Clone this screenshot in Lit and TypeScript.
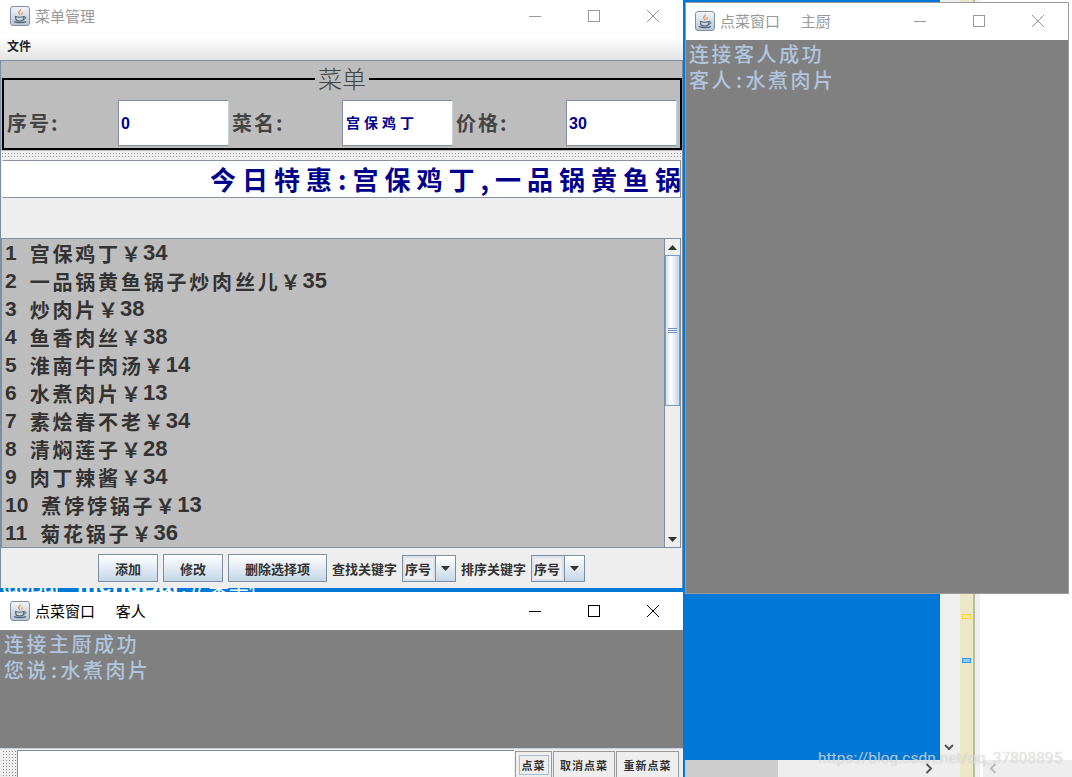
import { LitElement, html, css, svg } from "lit";
import { customElement } from "lit/decorators.js";

const javaIcon = html`<svg class="jicon" width="20" height="20" viewBox="0 0 20 20">
  <defs><linearGradient id="jg" x1="0" y1="0" x2="0" y2="1"><stop offset="0" stop-color="#f4f7fa"/><stop offset="1" stop-color="#b4c4d4"/></linearGradient></defs>
  <rect x="0.5" y="0.5" width="19" height="19" rx="2.5" fill="url(#jg)" stroke="#7f8f9f"/>
  ${svg`<path d="M10.5 2.5c1.5 2-2 3-1 5 .4.8 1 1 1 2-1-.6-2.6-1.6-2.3-3.2.3-1.600 2.100-2 2.300-3.800z" fill="#e2762a"/>
  <path d="M12.200 5c.2 1.200-1.300 1.700-.9 3 .1.400.3.700.3 1 .9-.8 1.500-1.600 1.100-2.600-.1-.5-.4-.9-.5-1.400z" fill="#e8974f"/>
  <path d="M5.500 10.500c2 .8 6.500.8 8.500 0l-.5 3c-.3 1-2 1.500-3.700 1.500s-3.600-.5-3.900-1.500z" fill="none" stroke="#55606c" stroke-width="1.100"/>
  <path d="M14 11c1.400-.4 2.300.3 1.800 1.200-.4.700-1.300 1-2.300 1.200" fill="none" stroke="#55606c" stroke-width="1"/>
  <path d="M4 15.500c2.500 1.500 9.500 1.500 12 0" fill="none" stroke="#4a5f78" stroke-width="1.200"/>`}
</svg>`;

const winBtns = html`<div class="btns">
  <svg width="14" height="14" viewBox="0 0 14 14"><path d="M1 7.500h12" stroke="currentColor" fill="none"/></svg>
  <svg width="14" height="14" viewBox="0 0 14 14"><rect x="1.500" y="1.500" width="11" height="11" stroke="currentColor" fill="none"/></svg>
  <svg width="14" height="14" viewBox="0 0 14 14"><path d="M1 1l12 12M13 1L1 13" stroke="currentColor" fill="none"/></svg>
</div>`;

const arrow = (up = false) => html`<svg width="9" height="5" viewBox="0 0 9 5"><path d="${up ? "M0 5h9L4.500 0z" : "M0 0h9L4.500 5z"}" fill="#333"/></svg>`;

const items = [
  ["1", "宫保鸡丁", "34"], ["2", "一品锅黄鱼锅子炒肉丝儿", "35"], ["3", "炒肉片", "38"], ["4", "鱼香肉丝", "38"],
  ["5", "淮南牛肉汤", "14"], ["6", "水煮肉片", "13"], ["7", "素烩春不老", "34"], ["8", "清焖莲子", "28"],
  ["9", "肉丁辣酱", "34"], ["10", "煮饽饽锅子", "13"], ["11", "菊花锅子", "36"],
];

@customElement("app-root")
export class AppRoot extends LitElement {
  static styles = css`
    :host { display: block; width: 1072px; height: 777px; position: relative; overflow: hidden; background: #fff;
      font-family: "Liberation Sans", "Noto Sans CJK SC", sans-serif; }
    .desktop { position: absolute; inset: 0; display: grid; grid-template-columns: 940px 20px 13px 2px 5px 1fr; }
    .blue { background: #0078d7; overflow: hidden; padding: 570px 0 0 2px; color: #fff; font: 20px "Liberation Sans", "Noto Sans CJK SC", sans-serif; white-space: pre; }
    .blue b { font-size: 24px; margin-left: 5px; }
    .lg { background: #efefef; }
    .beige { background: #ebe7c7; }
    .rule { background: #b9bd9f; }
    .white { background: #fff; }
    .mark { position: absolute; left: 962px; width: 9px; height: 5px; }
    .mark.y { top: 614px; background: #fbeaa0; border: 1px solid #f5cf3c; box-sizing: border-box; }
    .mark.b { top: 658px; background: #9ec6e6; border: 1px solid #2f9bf0; box-sizing: border-box; }
    .chev { position: absolute; }
    .hbar { position: absolute; top: 760px; height: 17px; background: #eee; }
    .hthumb { position: absolute; left: 685px; top: 760px; width: 93px; height: 17px; background: #cdcdcd; }

    .win { position: absolute; display: flex; flex-direction: column; background: #fff; box-sizing: border-box; overflow: hidden; }
    .title { display: flex; align-items: center; flex: none; background: #fff; font-size: 15px; box-sizing: border-box; }
    .title .name { margin-left: 5px; white-space: pre; }
    .inactive .title { color: #999; }
    .active .title { color: #000; }
    .jicon { flex: none; }
    .btns { margin-left: auto; display: flex; gap: 45px; align-items: center; }

    .main { left: 0; top: 0; width: 683px; height: 588px; }
    .main .title { height: 33px; padding: 0 23px 2px 10px; }
    .menubar { height: 27px; flex: none; background: linear-gradient(#fff 0%, #fff 15%, #e3e3e3 100%); font-size: 12px; font-weight: 700; color: #222; display: flex; align-items: center; padding: 0 0 2px 7px; box-sizing: border-box; }
    .content { flex: 1; display: flex; flex-direction: column; border-left: 1px solid #7d8fa3; border-right: 1px solid #7d8fa3; background: #eee; min-height: 0; }
    .formpanel { height: 91px; flex: none; background: #bdbdbd; border-top: 1px solid #7d8fa3; box-sizing: border-box; padding-top: 17px; position: relative; }
    .group { height: 72px; margin: 0 0 0 1px; width: 680px; border: 2px solid #000; box-sizing: border-box; display: grid; grid-template-columns: 111px 111px 113px 111px 113px 111px; column-gap: 0; align-items: center; padding: 20px 0 2px 3px; position: relative; }
    .legend { position: absolute; left: 311px; top: -16px; background: #bdbdbd; padding: 0 3px; font-size: 24px; line-height: 28px; color: #444; font-family: "Noto Sans CJK SC", sans-serif; font-weight: 300; }
    .lbl { font-size: 20px; font-weight: 700; color: #444; letter-spacing: 2px; font-family: "Noto Sans CJK SC", sans-serif; padding-bottom: 2px; }
    .lbl.next { padding-left: 3px; }
    .field { height: 46px; background: #fff; border: 1px solid #7d8fa3; border-right-color: #c9d3de; border-top-color: #7d8fa3; box-sizing: border-box; display: flex; align-items: center; padding: 1px 0 0 2px; color: #00008b; font-weight: 700; font-size: 16px; }
    .field.cn { font-size: 14px; letter-spacing: 4px; padding: 0 0 2px 3px; font-family: "Noto Sans CJK SC", sans-serif; }
    .dots { flex: none; height: 7px; background-color: #eee; background-image: radial-gradient(#9a9a9a 0.7px, transparent 0.8px); background-size: 3px 3px; background-position: 0 1px; }
    .marquee { height: 38px; flex: none; margin: 2px 1px 0 1px; border: 1px solid #8593a3; border-left-color: #fff; border-top-color: #8593a3; background: #fff; box-sizing: border-box; overflow: hidden; white-space: nowrap; display: flex; align-items: center; padding: 0 0 2px 207px; font-size: 26px; font-weight: 700; letter-spacing: 6px; color: #00008b; font-family: "Noto Sans CJK SC", sans-serif; }
    .gap { height: 40px; flex: none; background: #eee; }
    .listwrap { height: 310px; flex: none; display: flex; border: 1px solid #7d8fa3; border-left: 1px solid #7d8fa3; border-right: none; margin-right: 1px; box-sizing: border-box; background: #bdbdbd; }
    .list { flex: 1; min-width: 0; overflow: hidden; padding: 0 0 0 3px; }
    .row { height: 28px; display: flex; align-items: center; font-size: 20px; font-weight: 700; color: #333; white-space: pre; font-family: "Liberation Sans", "Noto Sans CJK SC", sans-serif; }
    .row .n { font-size: 21px; margin-right: 13px; }
    .row .c { letter-spacing: 2.800px; font-family: "Noto Sans CJK SC", sans-serif; }
    .row .p { font-size: 22px; margin-left: 2px; }
    .sb { width: 15px; flex: none; border-left: 1px solid #7d8fa3; border-right: 1px solid #7d8fa3; display: flex; flex-direction: column; background: #eee; box-sizing: content-box; }
    .sbb { height: 16px; flex: none; display: flex; align-items: center; justify-content: center; background: #eee; }
    .thumb { height: 151px; flex: none; border: 1px solid #7b9bcf; box-sizing: border-box; background: linear-gradient(90deg, #d5e2f0, #fff 35%, #c4d6e9 100%); display: flex; flex-direction: column; align-items: center; justify-content: center; gap: 1px; }
    .thumb i { display: block; width: 9px; height: 1px; background: #6f92c9; }
    .track { flex: 1; }
    .toolbar { flex: 1; display: flex; align-items: center; justify-content: flex-start; padding: 0 0 0 97px; background: #eee; font-size: 13px; font-weight: 700; color: #333; font-family: "Noto Sans CJK SC", sans-serif; }
    .jbtn { height: 28px; box-sizing: border-box; border: 1px solid #7d8fa3; background: linear-gradient(#fff, #c5d6e8); display: flex; align-items: center; justify-content: center; color: #333; font-size: 13px; margin-right: 5px; }
    .w60 { width: 60px; } .w99 { width: 99px; }
    .kw { margin-left: 0; width: 70px; font-size: 13px; }
    .combo { width: 54px; height: 27px; border: 1px solid #7d8fa3; box-sizing: border-box; display: flex; margin-right: 5px; }
    .combo .v { flex: 1; border: 2px solid #d9e2ec; background: #eee; display: flex; align-items: center; padding-left: 0; font-size: 13px; }
    .combo .a { width: 19px; border-left: 1px solid #7d8fa3; background: linear-gradient(#fff, #c5d6e8); display: flex; align-items: center; justify-content: center; }

    .log { background: #808080; color: #b0c4de; font-family: "Noto Sans CJK SC", sans-serif; font-size: 20px; line-height: 26px; letter-spacing: 2.500px; font-weight: 500; padding: 1px 0 0 3px; box-sizing: border-box; flex: 1; min-height: 0; }
    .cl { padding: 0 1px 0 2px; }

    .chef { left: 685px; top: 2px; width: 384px; height: 592px; border: 1px solid #9a9a9a; }
    .chef .title { height: 37px; padding: 0 23px 2px 9px; }
    .chef .log { padding-left: 2px; border-left: 1px solid #808080; }

    .cust { left: 0; top: 592px; width: 683px; height: 185px; }
    .cust .title { height: 38px; padding: 0 23px 1px 10px; }
    .cust .log { flex: none; height: 118px; padding-left: 4px; }
    .input { flex: 1; display: flex; background: #eee; border-top: 1px solid #c4d0dc; padding-top: 1px; min-height: 0; }
    .vdots { width: 15px; margin-left: 2px; flex: none; background-color: #eee; background-image: radial-gradient(#8f8f8f 0.7px, transparent 0.8px); background-size: 3px 3px; }
    .tf { width: 497px; flex: none; background: #fff; border-top: 1px solid #7d8fa3; border-left: 1px solid #7d8fa3; box-sizing: border-box; }
    .cbtns { display: flex; gap: 1px; margin-left: 1px; padding-top: 1px; }
    .cb { height: 26px; box-sizing: border-box; border: 1px solid #9a9a9a; border-bottom: none; background: #eee; display: flex; align-items: center; justify-content: center; font-size: 11px; font-weight: 700; color: #333; letter-spacing: 1px; font-family: "Noto Sans CJK SC", sans-serif; }
    .cb span { padding: 1px 2px; border: 1px solid transparent; }
    .cb.f span { border-color: #a9bbd0; }
    .c1 { width: 37px; } .c2 { width: 62px; } .c3 { width: 63px; }

    .wm { position: absolute; left: 818px; top: 749px; font-size: 15.500px; color: rgba(255, 255, 255, 0.6); font-family: Roboto, sans-serif; text-shadow: 0 0 1px rgba(120, 120, 120, 0.5); white-space: nowrap; }
  `;

  render() {
    return html`
      <div class="desktop">
        <div class="blue">tabBar  <b>menuBar</b>; // 菜单栏</div><div class="lg"></div><div class="beige"></div><div class="rule"></div><div class="lg"></div><div class="white"></div>
      </div>
      <div class="mark y"></div><div class="mark b"></div>
      <svg class="chev" style="left:944px;top:744px" width="10" height="7" viewBox="0 0 10 7"><path d="M1 1l4 4 4-4" fill="none" stroke="#555" stroke-width="2"/></svg>
      <div class="hbar" style="left:685px;width:275px"></div><div class="hbar" style="left:983px;width:89px"></div><div class="hthumb"></div>
      <svg class="chev" style="left:925px;top:763px" width="8" height="11" viewBox="0 0 8 11"><path d="M1.500 1l4.500 4.500-4.500 4.500" fill="none" stroke="#555" stroke-width="2"/></svg>
      <svg class="chev" style="left:989px;top:763px" width="8" height="11" viewBox="0 0 8 11"><path d="M6.500 1L2 5.500l4.500 4.500" fill="none" stroke="#bbb" stroke-width="2"/></svg>

      <section class="win main inactive">
        <div class="title">${javaIcon}<span class="name">菜单管理</span>${winBtns}</div>
        <div class="menubar">文件</div>
        <div class="content">
          <div class="formpanel">
            <div class="group">
              <div class="legend">菜单</div>
              <div class="lbl">序号:</div><div class="field">0</div>
              <div class="lbl next">菜名:</div><div class="field cn">宫保鸡丁</div>
              <div class="lbl next">价格:</div><div class="field">30</div>
            </div>
          </div>
          <div class="dots"></div>
          <div class="marquee">今日特惠:宫保鸡丁,一品锅黄鱼锅子炒肉丝儿</div>
          <div class="gap"></div>
          <div class="listwrap">
            <div class="list">
              ${items.map(([n, c, p]) => html`<div class="row"><span class="n">${n}</span><span class="c">${c}</span>￥<span class="p">${p}</span></div>`)}
            </div>
            <div class="sb">
              <div class="sbb">${arrow(true)}</div>
              <div class="thumb"><i></i><i></i><i></i></div>
              <div class="track"></div>
              <div class="sbb">${arrow()}</div>
            </div>
          </div>
          <div class="toolbar">
            <div class="jbtn w60">添加</div><div class="jbtn w60">修改</div><div class="jbtn w99">删除选择项</div>
            <div class="kw">查找关键字</div><div class="combo"><div class="v">序号</div><div class="a">${arrow()}</div></div>
            <div class="kw">排序关键字</div><div class="combo"><div class="v">序号</div><div class="a">${arrow()}</div></div>
          </div>
        </div>
      </section>

      <section class="win chef inactive">
        <div class="title">${javaIcon}<span class="name">点菜窗口     主厨</span>${winBtns}</div>
        <div class="log">连接客人成功<br />客人<span class="cl">:</span>水煮肉片</div>
      </section>

      <section class="win cust active">
        <div class="title">${javaIcon}<span class="name">点菜窗口     客人</span>${winBtns}</div>
        <div class="log">连接主厨成功<br />您说<span class="cl">:</span>水煮肉片</div>
        <div class="input">
          <div class="vdots"></div>
          <div class="tf"></div>
          <div class="cbtns">
            <div class="cb c1 f"><span>点菜</span></div><div class="cb c2"><span>取消点菜</span></div><div class="cb c3"><span>重新点菜</span></div>
          </div>
        </div>
      </section>
      <div class="wm">https://blog.csdn.net/qq_37808895</div>
    `;
  }
}
